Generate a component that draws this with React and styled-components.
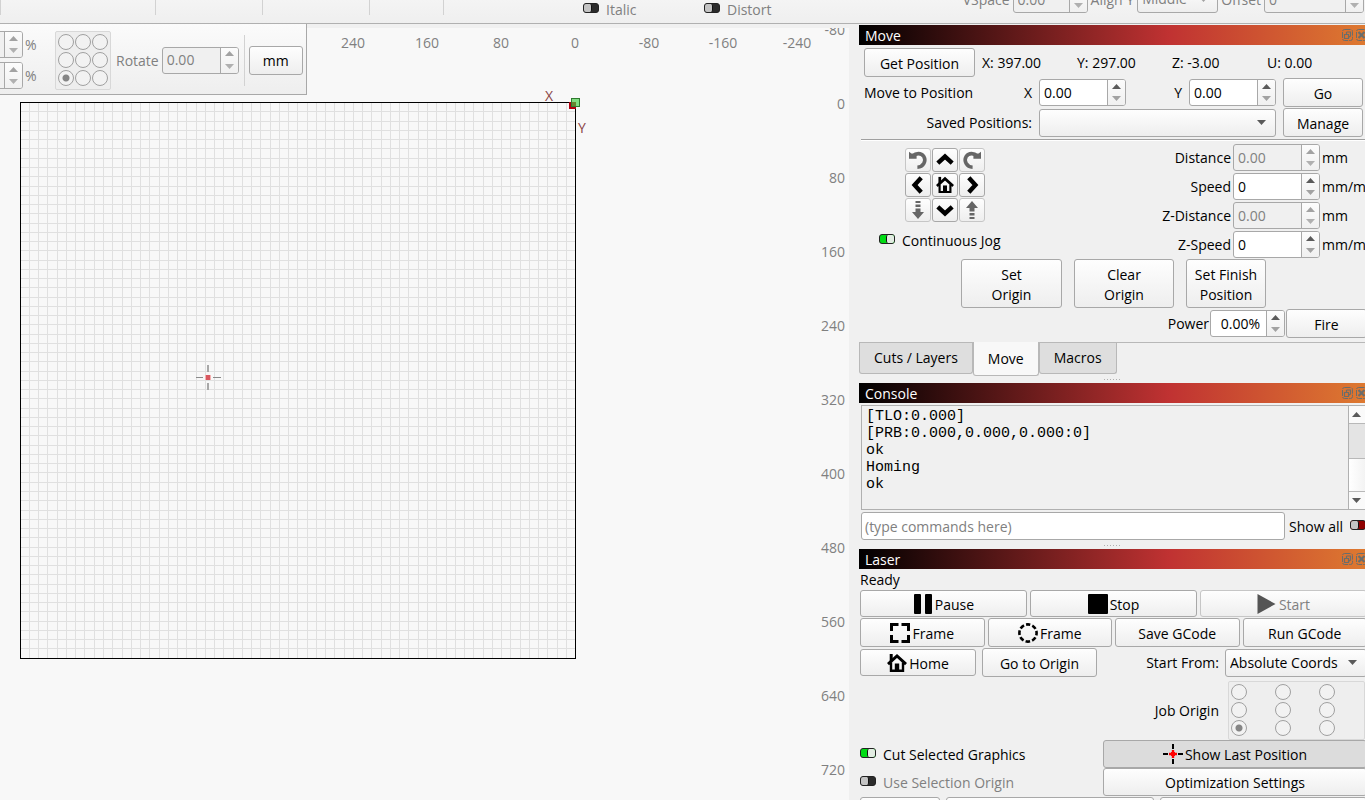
import { useState } from "react";
import styled, { createGlobalStyle, css } from "styled-components";

const MM = 9.257 / 10;
const ORIGIN_X = 575.6;
const ORIGIN_Y = 74.7;

const lines = Array.from({ length: 61 }, (_, i) => i);
const xLabels = [240, 160, 80, 0, -80, -160, -240];
const yLabels = [-80, 0, 80, 160, 240, 320, 400, 480, 560, 640, 720];
const nine = Array.from({ length: 9 }, (_, i) => i);

const Arrow = ({ up, color = "#5a5a5a" }) => (
  <svg width="9" height="5" viewBox="0 0 9 5" aria-hidden="true">
    <path d={up ? "M0 5L4.5 0L9 5Z" : "M0 0L4.5 5L9 0Z"} fill={color} />
  </svg>
);

const HomeIcon = ({ size }) => (
  <svg width={size} height={size} viewBox="0 0 20 20" fill="none" stroke="#000" aria-hidden="true">
    <path d="M1 11.2L10 3L19 11.2" strokeWidth="3" />
    <path d="M4 9.5V17.8H16V9.5" strokeWidth="2.4" />
    <path d="M4.2 1V8" strokeWidth="3" />
    <path d="M7.8 17V10.5H12.2V17Z" fill="#000" stroke="none" />
  </svg>
);

const Chevron = ({ turn }) => (
  <svg width="20" height="20" viewBox="0 0 20 20" aria-hidden="true">
    <path
      d="M2.8 13.2L10 6.6L17.2 13.2"
      transform={`rotate(${turn} 10 10)`}
      fill="none"
      stroke="#000"
      strokeWidth="4.4"
    />
  </svg>
);

const RotateIcon = ({ flip }) => (
  <svg width="20" height="20" viewBox="0 0 20 20" aria-hidden="true">
    <g transform={flip ? "translate(20 0) scale(-1 1)" : undefined}>
      <path d="M4.5 6.2C8 2.8 13.2 2.6 15.8 6.4C18.4 11 15.6 17 9.4 17.2" fill="none" stroke="#666" strokeWidth="3.6" />
      <path d="M1 1.8L3.4 3.4L8.6 3.8V8.8H1Z" fill="#666" />
    </g>
  </svg>
);

const ZIcon = ({ up }) => (
  <svg width="20" height="20" viewBox="0 0 20 20" aria-hidden="true">
    <g fill="#666" transform={up ? "rotate(180 10 10)" : undefined}>
      <path d="M7.5 1H12.5V3H7.5ZM7.5 4.5H12.5V7H7.5ZM7.5 8.5H12.5V12H16L10 19L4 12H7.5Z" />
    </g>
  </svg>
);

const PauseIcon = () => (
  <svg width="20" height="20" viewBox="0 0 20 20" aria-hidden="true">
    <rect x="1" width="7" height="20" rx="1" />
    <rect x="12" width="7" height="20" rx="1" />
  </svg>
);

const StopIcon = () => (
  <svg width="20" height="20" viewBox="0 0 20 20" aria-hidden="true">
    <rect width="20" height="20" rx="1" />
  </svg>
);

const PlayIcon = () => (
  <svg width="20" height="20" viewBox="0 0 20 20" aria-hidden="true">
    <path d="M0.5 0L18.5 10L0.5 20Z" fill="#555" />
  </svg>
);

const FrameIcon = () => (
  <svg width="20" height="20" viewBox="0 0 20 20" fill="none" stroke="#000" strokeWidth="3" aria-hidden="true">
    <path d="M1.5 8V1.5H8.5M11.5 1.5H18.5V8M18.5 12V18.5H11.5M8.5 18.5H1.5V12" />
  </svg>
);

const CircleIcon = () => (
  <svg width="20" height="20" viewBox="0 0 20 20" fill="none" stroke="#000" strokeWidth="2.6" aria-hidden="true">
    <circle cx="10" cy="10" r="8.6" strokeDasharray="4.6 2.154" strokeDashoffset="2.3" transform="rotate(-90 10 10)" />
  </svg>
);

const TargetIcon = () => (
  <svg width="20" height="20" viewBox="0 0 20 20" fill="none" aria-hidden="true">
    <path d="M0 10H5M15 10H20M10 0V5M10 15V20" stroke="#000" strokeWidth="2" />
    <path d="M6 10H14M10 6V14" stroke="#f00" strokeWidth="2.4" />
    <rect x="8" y="8" width="4" height="4" fill="#f00" />
  </svg>
);

const FloatIcon = () => (
  <svg width="11" height="12" viewBox="0 0 11 12" fill="none" stroke="#6b6d6b" aria-hidden="true">
    <rect x="0.5" y="0.5" width="10" height="11" rx="2" strokeDasharray="6 1" />
    <path d="M4.5 3H8.5V7L6.5 8.5M2.5 5.5H6.5V9.5H2.5ZM4.5 3V5" strokeWidth="1.2" />
  </svg>
);

const CloseIcon = () => (
  <svg width="11" height="12" viewBox="0 0 11 12" fill="none" stroke="#6b6d6b" aria-hidden="true">
    <rect x="0.5" y="0.5" width="10" height="11" rx="2" strokeDasharray="6 1" />
    <path d="M2.5 3L8.5 9M8.5 3L2.5 9" strokeWidth="2.2" />
  </svg>
);

const Spin = ({ id, label, value, width, disabled, right }) => (
  <SpinBox $width={width} $disabled={disabled}>
    <SpinInput id={id} aria-label={label} defaultValue={value} disabled={disabled} $right={right} />
    <SpinButtons>
      <SpinButton aria-label="Increase" disabled={disabled}>
        <Arrow up color={disabled ? "#a2a2a2" : "#5a5a5a"} />
      </SpinButton>
      <SpinButton aria-label="Decrease" disabled={disabled}>
        <Arrow color={disabled ? "#b0b0b0" : "#a2a2a2"} />
      </SpinButton>
    </SpinButtons>
  </SpinBox>
);

const Combo = ({ id, label, options, width, disabled }) => (
  <ComboBox $width={width} $disabled={disabled}>
    <select id={id} aria-label={label} disabled={disabled}>
      {options.map((o) => (
        <option key={o}>{o}</option>
      ))}
    </select>
    <ComboArrow>
      <Arrow color={disabled ? "#a2a2a2" : "#5a5a5a"} />
    </ComboArrow>
  </ComboBox>
);

const Toggle = ({ text, on, color, disabled, reverse }) => (
  <ToggleLabel $disabled={disabled} $reverse={reverse}>
    <Switch type="checkbox" defaultChecked={on} disabled={disabled} $color={color} />
    {text}
  </ToggleLabel>
);

const DockTitle = ({ children }) => (
  <TitleBar>
    <TitleText>{children}</TitleText>
    <TitleButton aria-label={`Float ${children}`}>
      <FloatIcon />
    </TitleButton>
    <TitleButton aria-label={`Close ${children}`}>
      <CloseIcon />
    </TitleButton>
  </TitleBar>
);

const OriginPicker = ({ name, wide }) => (
  <OriginGrid $wide={wide} role="radiogroup" aria-label={name}>
    {nine.map((i) => (
      <Radio key={i} type="radio" name={name} aria-label={`${name} ${i + 1}`} defaultChecked={i === 6} />
    ))}
  </OriginGrid>
);

const Workspace = () => (
  <Canvas role="img" aria-label="Work area">
    <g fill="#e0e0e0" shapeRendering="crispEdges">
      {lines.map((i) => (
        <rect key={`v${i}`} x={Math.floor(ORIGIN_X - i * 10 * MM)} y="74" width="1" height="556" />
      ))}
      {lines.map((i) => (
        <rect key={`h${i}`} x="20" y={Math.floor(ORIGIN_Y + i * 10 * MM)} width="555" height="1" />
      ))}
    </g>
    <rect x="20.5" y="74.5" width="555" height="556" fill="none" stroke="#000" />
    {xLabels.map((n) => (
      <AxisText key={n} x={575 - n * 0.925} y="20" textAnchor="middle">
        {n}
      </AxisText>
    ))}
    {yLabels.map((n) => (
      <AxisText key={n} x="845" y={81 + n * 0.925} textAnchor="end">
        {n}
      </AxisText>
    ))}
    <OriginText x="545" y="73">X</OriginText>
    <OriginText x="578" y="105">Y</OriginText>
    <rect x="569" y="74" width="7" height="7" fill="#b00010" />
    <rect x="571.5" y="70.5" width="8" height="8" fill="#40cc40" fillOpacity="0.65" stroke="#2f7a2f" />
    <g shapeRendering="crispEdges">
      <path d="M196 349.5H203M213 349.5H221" stroke="#8a8a8a" />
      <path d="M208 337V344M208 355V362" stroke="#a8a8a8" strokeWidth="2" />
      <rect x="205" y="347" width="6" height="5" fill="#f4b0b0" />
      <rect x="206" y="347" width="4" height="5" fill="#d85860" />
    </g>
  </Canvas>
);

const App = () => {
  const [tab, setTab] = useState("Move");

  return (
    <Window>
      <GlobalStyle />
      <TextToolbar>
        <ToolCell $line />
        <ToolCell $line />
        <ToolCell $line />
        <ToolCell $line />
        <ToolCell $line />
        <ToolCell>
          <Toggle text="Italic" disabled />
        </ToolCell>
        <ToolCell>
          <Toggle text="Distort" disabled />
        </ToolCell>
        <TextFields>
          <TextField>
            <label htmlFor="vspace">VSpace</label>
            <Spin id="vspace" value="0.00" width={75} disabled />
          </TextField>
          <TextField>
            <label htmlFor="aligny">Align Y</label>
            <Combo id="aligny" options={["Middle"]} width={81} disabled />
          </TextField>
          <TextField>
            <label htmlFor="offset">Offset</label>
            <Spin id="offset" value="0" width={100} disabled />
          </TextField>
        </TextFields>
      </TextToolbar>

      <Body>
        <WorkColumn>
          <Workspace />
          <ShapeToolbar>
            <ScaleColumn>
              <Scale>
                <Spin label="Scale width" width={80} disabled />
                <span>%</span>
              </Scale>
              <Scale>
                <Spin label="Scale height" width={80} disabled />
                <span>%</span>
              </Scale>
            </ScaleColumn>
            <OriginPicker name="Anchor" />
            <RotateField>
              <label htmlFor="rotate">Rotate</label>
              <Spin id="rotate" value="0.00" width={77} disabled />
            </RotateField>
            <ToolbarLine />
            <Button $width={54}>mm</Button>
          </ShapeToolbar>
        </WorkColumn>

        <Dock>
          <DockTitle>Move</DockTitle>
          <MovePanel>
            <Position>
              <Button $width={111}>Get Position</Button>
              <span>X: 397.00</span>
              <span>Y: 297.00</span>
              <span>Z: -3.00</span>
              <span>U: 0.00</span>
            </Position>
            <MoveGrid>
              <MoveTo>
                <span>Move to Position</span>
                <label htmlFor="moveX">X</label>
              </MoveTo>
              <Spin id="moveX" value="0.00" />
              <RightLabel htmlFor="moveY">Y</RightLabel>
              <Spin id="moveY" value="0.00" />
              <Button>Go</Button>
              <RightLabel htmlFor="saved">Saved Positions:</RightLabel>
              <SavedCell>
                <Combo id="saved" options={[""]} />
              </SavedCell>
              <Button>Manage</Button>
            </MoveGrid>
          </MovePanel>
          <Divider />
          <JogRow>
            <JogColumn>
              <JogPad>
                <JogButton aria-label="Rotate left" disabled><RotateIcon /></JogButton>
                <JogButton aria-label="Up"><Chevron turn={0} /></JogButton>
                <JogButton aria-label="Rotate right" disabled><RotateIcon flip /></JogButton>
                <JogButton aria-label="Left"><Chevron turn={-90} /></JogButton>
                <JogButton aria-label="Home"><HomeIcon size={18} /></JogButton>
                <JogButton aria-label="Right"><Chevron turn={90} /></JogButton>
                <JogButton aria-label="Z down" disabled><ZIcon /></JogButton>
                <JogButton aria-label="Down"><Chevron turn={180} /></JogButton>
                <JogButton aria-label="Z up" disabled><ZIcon up /></JogButton>
              </JogPad>
              <Toggle text="Continuous Jog" on />
            </JogColumn>
            <SpeedGrid>
              <label htmlFor="distance">Distance</label>
              <Spin id="distance" value="0.00" disabled />
              <span>mm</span>
              <label htmlFor="speed">Speed</label>
              <Spin id="speed" value="0" />
              <span>mm/min</span>
              <label htmlFor="zdistance">Z-Distance</label>
              <Spin id="zdistance" value="0.00" disabled />
              <span>mm</span>
              <label htmlFor="zspeed">Z-Speed</label>
              <Spin id="zspeed" value="0" />
              <span>mm/min</span>
            </SpeedGrid>
          </JogRow>
          <OriginButtons>
            <TallButton $width={101}>Set<br />Origin</TallButton>
            <TallButton $width={100}>Clear<br />Origin</TallButton>
            <TallButton $width={80}>Set Finish<br />Position</TallButton>
          </OriginButtons>
          <PowerRow>
            <label htmlFor="power">Power</label>
            <Spin id="power" value="0.00%" width={75} right />
            <Button $width={81}>Fire</Button>
          </PowerRow>
          <Tabs role="tablist">
            {["Cuts / Layers", "Move", "Macros"].map((t) => (
              <Tab key={t} role="tab" aria-selected={t === tab} $active={t === tab} onClick={() => setTab(t)}>
                {t}
              </Tab>
            ))}
          </Tabs>
          <Handle />

          <DockTitle>Console</DockTitle>
          <ConsoleBox>
            <ConsoleText>
              {"[TLO:0.000]\n[PRB:0.000,0.000,0.000:0]\nok\nHoming\nok"}
            </ConsoleText>
            <ScrollBar>
              <ScrollButton aria-label="Scroll up"><Arrow up /></ScrollButton>
              <ScrollTrack />
              <ScrollThumb />
              <ScrollButton aria-label="Scroll down"><Arrow /></ScrollButton>
            </ScrollBar>
          </ConsoleBox>
          <CommandRow>
            <CommandInput aria-label="Command" placeholder="(type commands here)" />
            <Toggle text="Show all" color="#8e0000" reverse />
          </CommandRow>
          <Handle />

          <DockTitle>Laser</DockTitle>
          <LaserPanel>
            <Status>Ready</Status>
            <ButtonRow>
              <Button $short><PauseIcon />Pause</Button>
              <Button $short><StopIcon />Stop</Button>
              <Button $short disabled><PlayIcon />Start</Button>
            </ButtonRow>
            <ButtonRow>
              <Button><FrameIcon />Frame</Button>
              <Button><CircleIcon />Frame</Button>
              <Button>Save GCode</Button>
              <Button>Run GCode</Button>
            </ButtonRow>
            <HomeRow>
              <Button $short $width={116}><HomeIcon size={20} />Home</Button>
              <Button $width={115}>Go to Origin</Button>
              <StartFrom htmlFor="startFrom">Start From:</StartFrom>
              <Combo id="startFrom" options={["Absolute Coords"]} width={142} />
            </HomeRow>
            <JobRow>
              <span>Job Origin</span>
              <OriginPicker name="Job Origin" wide />
            </JobRow>
            <Options>
              <Toggle text="Cut Selected Graphics" on />
              <Button $pressed><TargetIcon />Show Last Position</Button>
              <Toggle text="Use Selection Origin" disabled />
              <Button>Optimization Settings</Button>
            </Options>
            <DeviceRow>
              <Button aria-label="Devices" />
              <Button aria-label="Port" />
              <Button aria-label="Device" />
            </DeviceRow>
          </LaserPanel>
        </Dock>
      </Body>
    </Window>
  );
};

const GlobalStyle = createGlobalStyle`
  * {
    box-sizing: border-box;
  }
  body {
    margin: 0;
    overflow: hidden;
    background: #f0f0f0;
    color: #000;
    font: 14px/20px "Open Sans", "Noto Sans", sans-serif;
  }
  button, input, select {
    margin: 0;
    color: inherit;
    font: inherit;
  }
  svg {
    flex: none;
  }
  label, span {
    padding-top: 1px;
  }
`;

const Window = styled.div`
  display: flex;
  flex-direction: column;
  height: 100vh;
  overflow: hidden;
  white-space: nowrap;
`;

const TextToolbar = styled.div`
  display: grid;
  grid-template-columns: 0 156px 107px 107px 213px 121px 241px 1fr;
  flex: none;
  height: 24px;
  border-bottom: 1px solid #b0b0b0;
  background: linear-gradient(#f4f4f4, #efefef);
  color: #808080;
`;

const ToolCell = styled.div`
  display: flex;
  align-items: center;
  height: 19px;
  ${({ $line }) =>
    $line &&
    css`
      height: 15px;
      border-right: 1px solid #d2d2d2;
    `}
  &:nth-child(5) {
    width: 74px;
  }
`;

const TextFields = styled.div`
  display: flex;
  align-items: flex-end;
  justify-content: flex-end;
  gap: 3px;
  height: 13px;
  padding-right: 1px;
`;

const TextField = styled.div`
  display: flex;
  align-items: flex-end;
  gap: 3px;
  label {
    padding-bottom: 3px;
  }
`;

const Body = styled.div`
  display: grid;
  grid-template-columns: minmax(0, 1fr) 506px;
  column-gap: 10px;
  flex: 1;
  min-height: 0;
`;

const WorkColumn = styled.main`
  position: relative;
  display: flex;
  padding-top: 4px;
`;

const Canvas = styled.svg`
  width: 100%;
  height: 100%;
  background: #f8f8f8;
`;

const AxisText = styled.text`
  fill: #808080;
  font-size: 14px;
`;

const OriginText = styled.text`
  fill: #8a4545;
  font-size: 14px;
`;

const ShapeToolbar = styled.div`
  position: absolute;
  top: 0;
  left: 0;
  display: flex;
  align-items: center;
  height: 71px;
  padding: 2px 3px 0 0;
  border: solid #a8a8a8;
  border-width: 0 1px 1px 0;
  background: linear-gradient(#fbfbfb, #eeeeee);
  color: #808080;
  overflow: hidden;
  button {
    color: #000;
  }
`;

const ScaleColumn = styled.div`
  display: flex;
  flex-direction: column;
  gap: 4px;
  width: 112px;
  margin-left: -57px;
`;

const Scale = styled.div`
  display: flex;
  align-items: center;
  gap: 2px;
`;

const RotateField = styled.div`
  display: flex;
  align-items: center;
  gap: 3px;
  margin-left: 5px;
`;

const ToolbarLine = styled.div`
  width: 1px;
  height: 51px;
  margin: 0 4px 0 5px;
  background: #d2d2d2;
`;

const Dock = styled.aside`
  min-width: 0;
  padding-top: 1px;
  overflow: hidden;
`;

const TitleBar = styled.div`
  display: flex;
  align-items: center;
  gap: 3px;
  height: 20px;
  margin-right: -2px;
  padding-left: 6px;
  background: linear-gradient(90deg, #000 0, #c03232 61%, #de7a30 100%);
`;

const TitleText = styled.h2`
  flex: 1;
  margin: 0;
  padding-top: 1px;
  color: #fff;
  font-size: 14px;
  font-weight: 400;
`;

const TitleButton = styled.button`
  display: flex;
  flex: none;
  padding: 0;
  border: 0;
  background: none;
`;

const Button = styled.button`
  display: flex;
  align-items: center;
  justify-content: center;
  gap: 2px;
  width: ${({ $width }) => ($width ? `${$width}px` : "auto")};
  height: ${({ $short }) => ($short ? 27 : 29)}px;
  padding: 2px 0 0;
  border: 1px solid #a8a8a8;
  border-radius: 3px;
  background: ${({ $pressed }) => ($pressed ? "#dcdcdc" : "linear-gradient(#fefefe, #eeeeee)")};
  svg {
    margin-bottom: 2px;
  }
  &:disabled {
    border-color: #c6c6c6;
    color: #808080;
  }
`;

const TallButton = styled(Button)`
  height: 49px;
`;

const SpinBox = styled.div`
  display: flex;
  flex: none;
  width: ${({ $width }) => ($width ? `${$width}px` : "auto")};
  height: 27px;
  border: 1px solid #a8a8a8;
  border-radius: 3px;
  background: ${({ $disabled }) => ($disabled ? "#f0f0f0" : "#fff")};
  color: ${({ $disabled }) => ($disabled ? "#808080" : "#000")};
  overflow: hidden;
`;

const SpinInput = styled.input`
  flex: 1;
  width: 0;
  min-width: 0;
  padding: 0 6px 0 4px;
  border: 0;
  background: none;
  text-align: ${({ $right }) => ($right ? "right" : "left")};
`;

const SpinButtons = styled.div`
  display: flex;
  flex-direction: column;
  width: 18px;
  border-left: 1px solid #a8a8a8;
  background: linear-gradient(#fcfcfc, #f0f0f0);
`;

const SpinButton = styled.button`
  display: flex;
  flex: 1;
  align-items: center;
  justify-content: center;
  min-height: 0;
  padding: 0;
  border: 0;
  background: none;
`;

const ComboBox = styled.div`
  display: grid;
  width: ${({ $width }) => ($width ? `${$width}px` : "100%")};
  height: 28px;
  color: ${({ $disabled }) => ($disabled ? "#808080" : "#000")};
  > * {
    grid-area: 1 / 1;
  }
  select {
    appearance: none;
    width: 100%;
    padding: 0 4px;
    border: 1px solid #a8a8a8;
    border-radius: 3px;
    background: linear-gradient(#fefefe, #eeeeee);
    opacity: 1;
  }
`;

const ComboArrow = styled.span`
  display: flex;
  align-items: center;
  justify-self: end;
  margin-right: 10px;
  padding: 0;
  pointer-events: none;
`;

const ToggleLabel = styled.label`
  display: flex;
  flex-direction: ${({ $reverse }) => ($reverse ? "row-reverse" : "row")};
  align-items: center;
  gap: 7px;
  color: ${({ $disabled }) => ($disabled ? "#808080" : "#000")};
`;

const Switch = styled.input`
  appearance: none;
  display: flex;
  flex: none;
  width: 16px;
  height: 10px;
  margin-bottom: 4px;
  border: 1px solid #222;
  border-radius: 3px;
  background: ${({ $color }) => $color || "#2b2b2b"};
  &::before {
    content: "";
    width: 7px;
    border-right: 1px solid #111;
    border-radius: 2px;
    background: #c4c4c4;
  }
  &:checked {
    justify-content: flex-end;
    background: #00dc14;
  }
  &:checked::before {
    border: 0;
    border-left: 1px solid #111;
    background: #e2ece2;
  }
`;

const OriginGrid = styled.div`
  display: grid;
  grid-template-columns: repeat(3, ${({ $wide }) => ($wide ? 44 : 17)}px);
  grid-auto-rows: 18px;
  align-items: center;
  width: ${({ $wide }) => ($wide ? 137 : 56)}px;
  height: 59px;
  padding: 1px 2px;
  border: 1px solid #d8d8d8;
  border-radius: 2px;
  background: #eeeeee;
`;

const Radio = styled.input`
  appearance: none;
  width: 16px;
  height: 16px;
  border: 1px solid #a0a0a0;
  border-radius: 50%;
  background: #f2f2f2;
  &:checked {
    background: radial-gradient(circle, #858585 0 3px, #f2f2f2 4px);
  }
`;

const MovePanel = styled.div`
  display: flex;
  flex-direction: column;
  gap: 1px;
  padding: 3px 0 0 5px;
`;

const Position = styled.div`
  display: grid;
  grid-template-columns: 118px repeat(4, 95px);
  align-items: center;
`;

const MoveGrid = styled.div`
  display: grid;
  grid-template-columns: 168px 87px 49px 87px 80px;
  grid-auto-rows: 29px;
  gap: 1px 7px;
  align-items: center;
`;

const MoveTo = styled.div`
  display: flex;
  justify-content: space-between;
`;

const RightLabel = styled.label`
  text-align: right;
`;

const SavedCell = styled.div`
  grid-column: span 3;
`;

const Divider = styled.hr`
  height: 2px;
  margin: 2px 0 0 2px;
  border: solid #a0a0a0;
  border-width: 1px 0 0;
  background: #fff;
`;

const JogRow = styled.div`
  display: flex;
  justify-content: space-between;
  padding: 3px 0 0 20px;
`;

const JogColumn = styled.div`
  display: flex;
  flex-direction: column;
  gap: 8px;
  padding-top: 4px;
`;

const JogPad = styled.div`
  display: grid;
  grid-template-columns: repeat(3, 26px);
  grid-auto-rows: 24px;
  gap: 1px;
  margin-left: 26px;
`;

const JogButton = styled(Button)`
  height: 24px;
  padding: 0;
  svg {
    margin: 0;
  }
`;

const SpeedGrid = styled.div`
  display: grid;
  grid-template-columns: auto 87px 43px;
  grid-auto-rows: 27px;
  gap: 2px;
  align-items: center;
  label {
    text-align: right;
  }
`;

const OriginButtons = styled.div`
  display: flex;
  gap: 12px;
  padding: 1px 0 0 102px;
`;

const PowerRow = styled.div`
  display: flex;
  align-items: center;
  justify-content: flex-end;
  gap: 1px;
  margin: 1px -2px 4px 0;
`;

const Tabs = styled.div`
  display: flex;
  align-items: flex-start;
  height: 33px;
  border-top: 1px solid #b8b8b8;
`;

const Tab = styled.button`
  height: 31px;
  padding: 0 14px;
  border: 1px solid #b8b8b8;
  border-top: 0;
  border-radius: 0 0 3px 3px;
  background: #dedede;
  ${({ $active }) =>
    $active &&
    css`
      height: 34px;
      margin-top: -1px;
      background: #f8f8f8;
    `}
`;

const Handle = styled.div`
  width: 17px;
  height: 1px;
  margin: 4px auto 3px;
  background: repeating-linear-gradient(90deg, #b0b0b0 0 1px, transparent 1px 3px);
`;

const ConsoleBox = styled.div`
  display: flex;
  height: 105px;
  margin: 2px -8px 0 2px;
  border: 1px solid #b0b0b0;
`;

const ConsoleText = styled.pre`
  flex: 1;
  margin: 0;
  padding: 2px 4px;
  font: 15px/17px "Liberation Mono", monospace;
`;

const ScrollBar = styled.div`
  display: flex;
  flex-direction: column;
  width: 24px;
  border-left: 1px solid #b0b0b0;
`;

const ScrollButton = styled.button`
  display: flex;
  align-items: center;
  height: 17px;
  padding: 0 3px;
  border: 0;
  background: #fafafa;
`;

const ScrollTrack = styled.div`
  flex: 1;
  border: solid #b8b8b8;
  border-width: 1px 0;
  background: #e4e4e4;
`;

const ScrollThumb = styled.div`
  height: 33px;
  border-bottom: 1px solid #b8b8b8;
  background: linear-gradient(90deg, #fff, #eeeeee);
`;

const CommandRow = styled.div`
  display: flex;
  align-items: center;
  gap: 4px;
  margin: 2px -1px 5px 2px;
`;

const CommandInput = styled.input`
  flex: 1;
  min-width: 0;
  height: 28px;
  padding: 0 3px;
  border: 1px solid #a8a8a8;
  border-radius: 3px;
  background: #fff;
  &::placeholder {
    color: #808080;
    opacity: 1;
  }
`;

const LaserPanel = styled.div`
  margin: 0 -2px 0 1px;
`;

const Status = styled.div`
  height: 21px;
  padding-top: 1px;
`;

const ButtonRow = styled.div`
  display: flex;
  gap: 3px;
  margin-bottom: 1px;
  > button {
    flex: 1;
  }
`;

const HomeRow = styled.div`
  display: flex;
  align-items: center;
  gap: 6px;
`;

const StartFrom = styled.label`
  flex: 1;
  text-align: right;
`;

const JobRow = styled.div`
  display: flex;
  align-items: center;
  justify-content: flex-end;
  gap: 9px;
  margin: 4px 2px 0 0;
`;

const Options = styled.div`
  display: grid;
  grid-template-columns: 243px 1fr;
  grid-auto-rows: 28px;
  > button {
    height: 28px;
  }
`;

const DeviceRow = styled.div`
  display: grid;
  grid-template-columns: 80px 208px 1fr;
  gap: 6px;
  margin-top: 1px;
`;

export default App;
